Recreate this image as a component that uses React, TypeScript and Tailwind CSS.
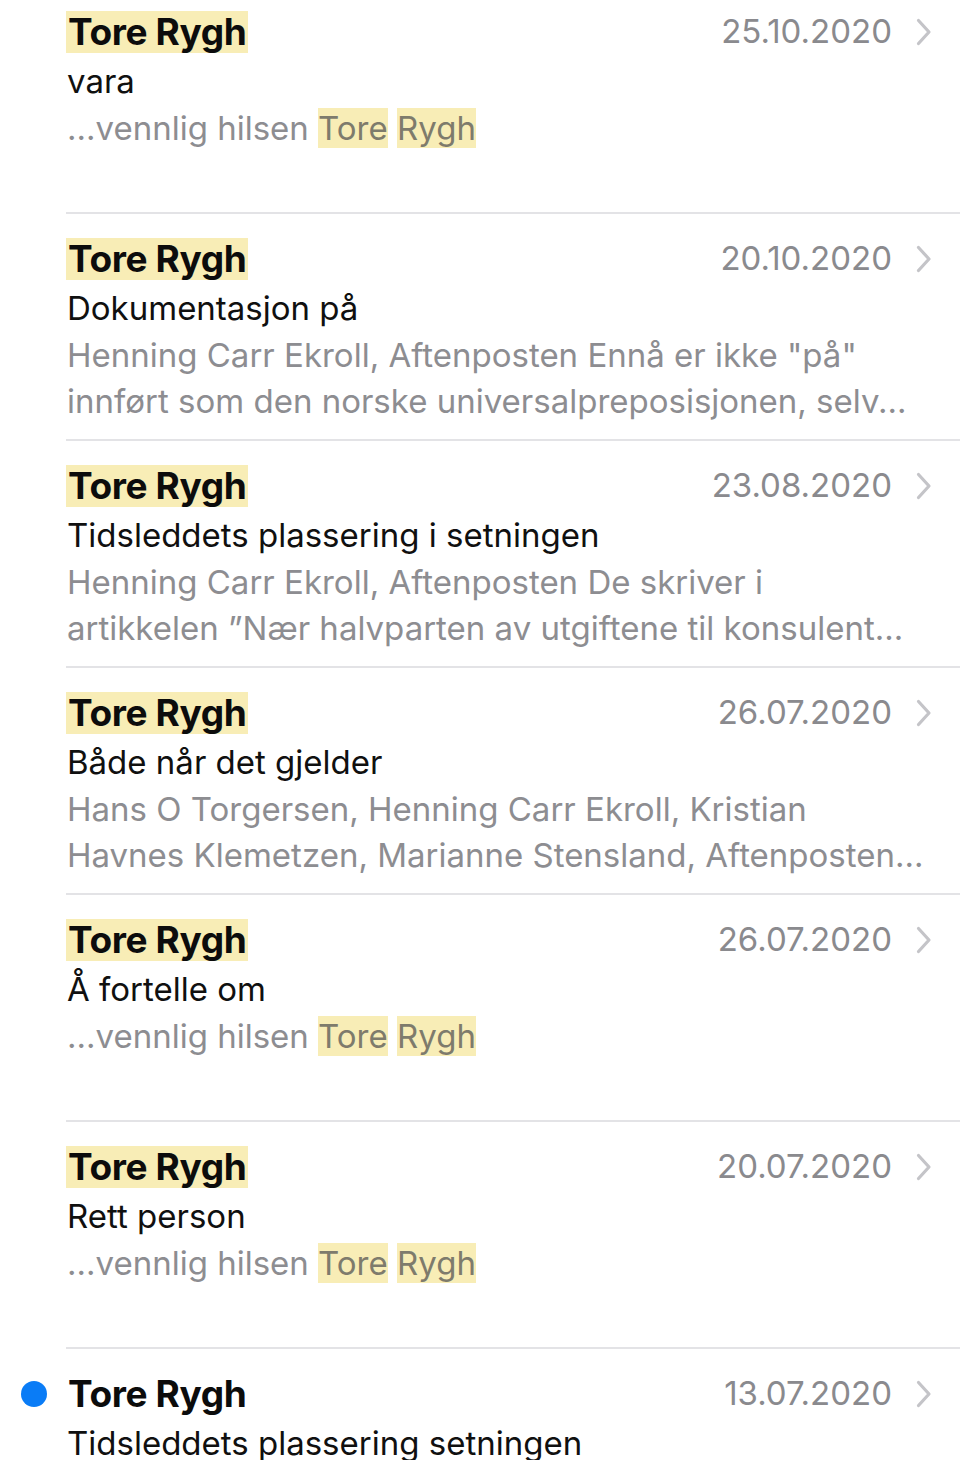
type Mail = {
  date: string;
  subject: string;
  snippet: string[];
  signature?: boolean;
  unread?: boolean;
};

const MAILS: Mail[] = [
  { date: "25.10.2020", subject: "vara", snippet: [], signature: true },
  {
    date: "20.10.2020",
    subject: "Dokumentasjon på",
    snippet: [
      'Henning Carr Ekroll, Aftenposten Ennå er ikke "på"',
      "innført som den norske universalpreposisjonen, selv...",
    ],
  },
  {
    date: "23.08.2020",
    subject: "Tidsleddets plassering i setningen",
    snippet: [
      "Henning Carr Ekroll, Aftenposten De skriver i",
      "artikkelen \u201dNær halvparten av utgiftene til konsulent...",
    ],
  },
  {
    date: "26.07.2020",
    subject: "Både når det gjelder",
    snippet: [
      "Hans O Torgersen, Henning Carr Ekroll, Kristian",
      "Havnes Klemetzen, Marianne Stensland, Aftenposten...",
    ],
  },
  { date: "26.07.2020", subject: "Å fortelle om", snippet: [], signature: true },
  { date: "20.07.2020", subject: "Rett person", snippet: [], signature: true },
  {
    date: "13.07.2020",
    subject: "Tidsleddets plassering setningen",
    snippet: [],
    unread: true,
  },
];

function Chevron() {
  return (
    <svg width="16" height="28" viewBox="0 0 16 28" fill="none">
      <polyline
        points="2.5,2.5 13,14 2.5,25.5"
        stroke="#c4c4c8"
        strokeWidth="3.2"
        strokeLinecap="round"
        strokeLinejoin="round"
      />
    </svg>
  );
}

function MailRow({ mail }: { mail: Mail }) {
  return (
    <div className="flex">
      <div className="flex w-[66px] shrink-0 justify-center pt-[32px] pl-[2px]">
        {mail.unread ? (
          <div className="h-[26px] w-[26px] rounded-full bg-[#0a7cf6]" />
        ) : null}
      </div>
      <div className="min-w-0 flex-1 border-b-2 border-[#e3e3e6]">
        <div className="pt-[20px] pr-[28px] pb-[15px]">
          <div className="flex h-[50px] items-center justify-between">
            <span
              className={
                mail.unread
                  ? "px-[2px] text-[37px] leading-[42px] font-bold tracking-[-0.01em] text-[#0c0c0c]"
                  : "bg-[#f8edb6] px-[2px] text-[37px] leading-[42px] font-bold tracking-[-0.01em] text-[#0c0c0c]"
              }
            >
              Tore Rygh
            </span>
            <div className="flex items-center gap-[24px] text-[33px] text-[#8a8a8e]">
              <span>{mail.date}</span>
              <Chevron />
            </div>
          </div>
          <div className="pl-[1px] text-[33px] leading-[48px] text-[#101010]">
            {mail.subject}
          </div>
          <div className="h-[92px] pl-[1px] text-[33px] leading-[46px] whitespace-nowrap text-[#8d8d91]">
            {mail.signature ? (
              <div>
                ...vennlig hilsen{" "}
                <span className="bg-[#f8edb6] text-[#7e7b6c]">Tore</span>{" "}
                <span className="bg-[#f8edb6] text-[#7e7b6c]">Rygh</span>
              </div>
            ) : (
              mail.snippet.map((line) => <div key={line}>{line}</div>)
            )}
          </div>
        </div>
      </div>
    </div>
  );
}

export default function App() {
  return (
    <div
      className="h-[1460px] overflow-hidden bg-white"
      style={{ fontFamily: "Inter, Roboto, 'Liberation Sans', sans-serif" }}
    >
      <div className="-mt-[13px]">
        {MAILS.map((m, i) => (
          <MailRow key={i} mail={m} />
        ))}
      </div>
    </div>
  );
}
